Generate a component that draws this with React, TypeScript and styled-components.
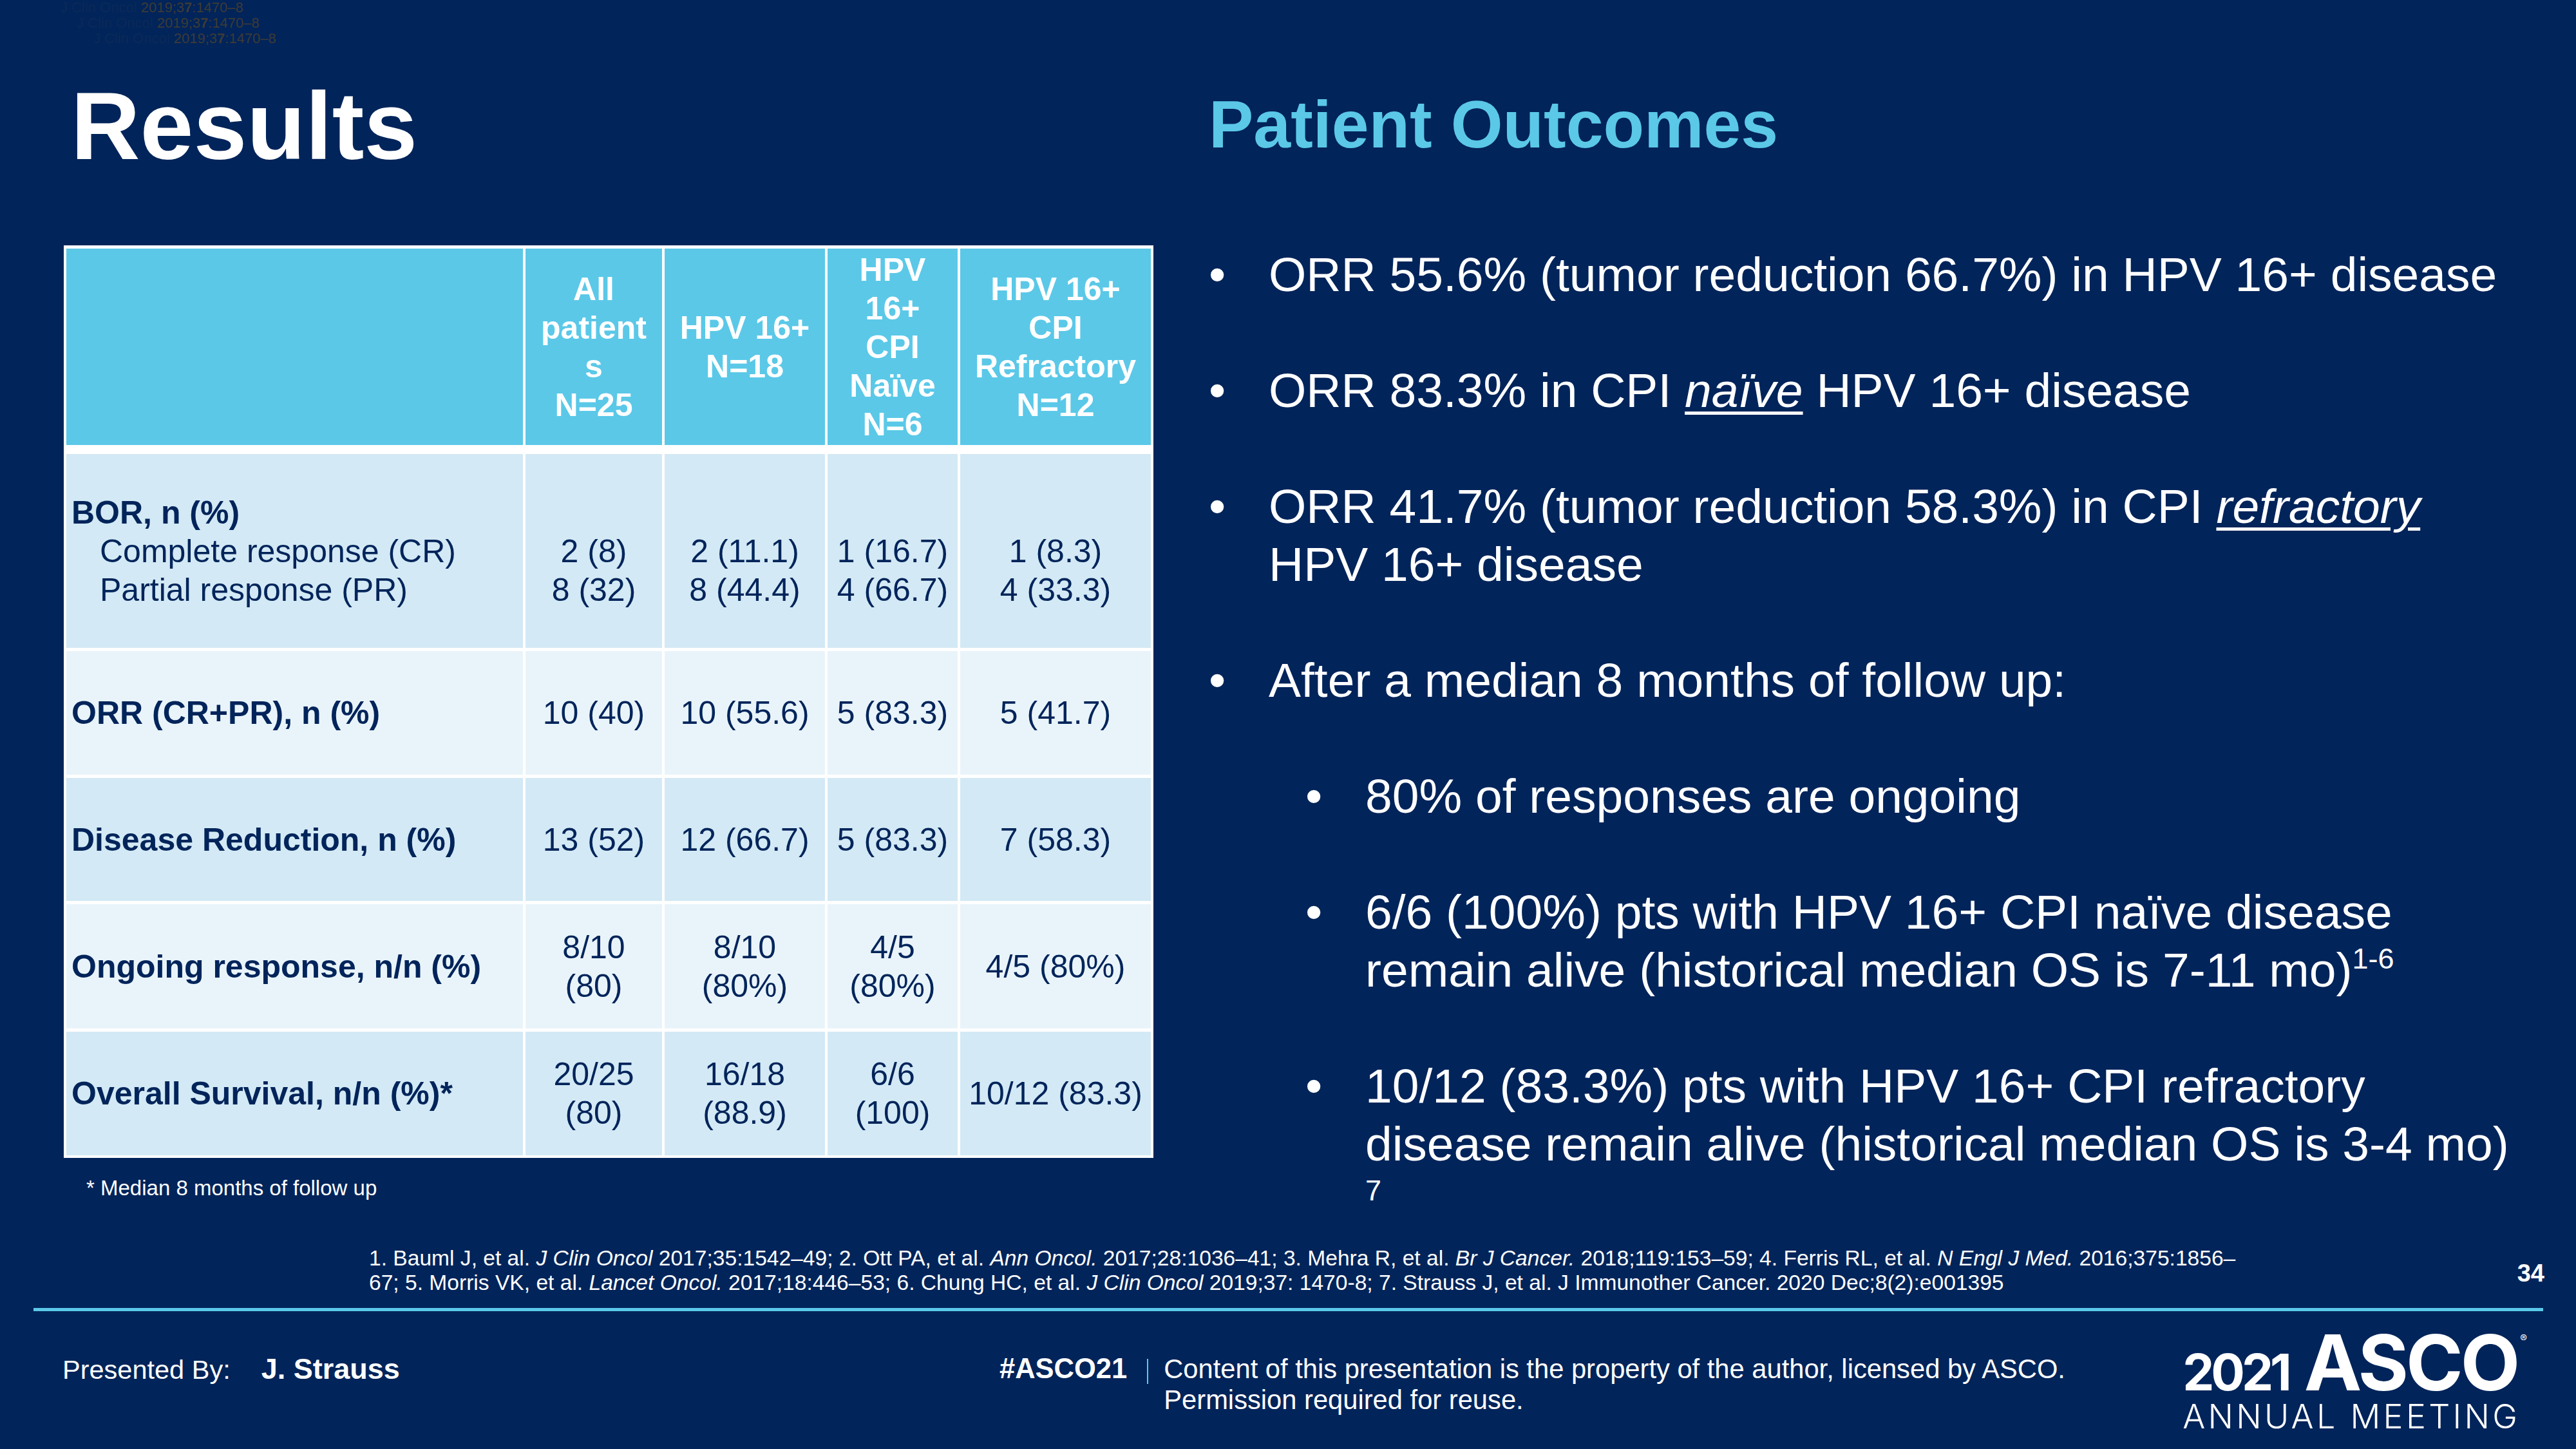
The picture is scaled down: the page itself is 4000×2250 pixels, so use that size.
import React from 'react';
import styled, { createGlobalStyle } from 'styled-components';

const NAVY = '#01245a';
const CYAN = '#5bc8e8';

const GlobalStyle = createGlobalStyle`
  html, body {
    margin: 0;
    padding: 0;
    background: ${NAVY};
  }
  body {
    font-family: "Liberation Sans", Arial, sans-serif;
  }
`;

// Slide frame
const Slide = styled.div`
  position: relative;
  width: 4000px;
  height: 2250px;
  overflow: hidden;
  background: ${NAVY};
  color: #fff;
  display: flex;
  flex-direction: column;
`;

// faint citation residue printed over the top-left corner
const GhostLayer = styled.div`
  position: absolute;
  top: 0;
  left: 0;
  font-size: 22px;
  line-height: 24px;
  color: #3d3b36;
  white-space: nowrap;
`;

const GhostLine = styled.div<{ $indent: number }>`
  padding-left: ${(p) => p.$indent}px;

  span {
    color: #0a2a58;
  }
`;

const Main = styled.div`
  display: flex;
  height: 1935px;
  padding-left: 99px;
  gap: 86px;
  flex: none;
`;

const LeftCol = styled.div`
  width: 1692px;
  padding-top: 121px;
  display: flex;
  flex-direction: column;
`;

const RightCol = styled.div`
  flex: 1;
  padding-top: 141px;
  display: flex;
  flex-direction: column;
`;

const Title = styled.h1`
  margin: 0 0 111px 11px;
  font-size: 149px;
  line-height: 149px;
  font-weight: 700;
  color: #fff;
`;

const SubTitle = styled.h2`
  margin: 0 0 135px 0;
  font-size: 104px;
  line-height: 105px;
  font-weight: 700;
  color: ${CYAN};
`;

// Table
type Tone = 'head' | 'dark' | 'light';

const toneBg: Record<Tone, string> = {
  head: CYAN,
  dark: '#d3e9f5',
  light: '#e9f4fa',
};

const TableFrame = styled.div`
  background: #fff;
  padding: 5px 4px 4px;
  display: flex;
  flex-direction: column;
  gap: 5px;
`;

const Row = styled.div<{ $h: number; $head?: boolean }>`
  display: grid;
  grid-template-columns: 709px 212px 249px 202px 296px;
  column-gap: 4px;
  height: ${(p) => p.$h}px;
  margin-bottom: ${(p) => (p.$head ? 9 : 0)}px;
`;

const Cell = styled.div<{ $tone: Tone; $left?: boolean }>`
  background: ${(p) => toneBg[p.$tone]};
  display: flex;
  flex-direction: column;
  justify-content: center;
  align-items: ${(p) => (p.$left ? 'flex-start' : 'center')};
  text-align: ${(p) => (p.$left ? 'left' : 'center')};
  padding: 0 ${(p) => (p.$left ? '0 0 8px' : '4px')};
  font-size: 50px;
  line-height: 60px;
  font-weight: ${(p) => (p.$tone === 'head' ? 700 : 400)};
  color: ${(p) => (p.$tone === 'head' ? '#fff' : NAVY)};
  white-space: nowrap;
`;

const Label = styled.div`
  font-weight: 700;
`;

const SubLabel = styled.div`
  padding-left: 44px;
`;

const Footnote = styled.div`
  margin: 27px 0 0 35px;
  font-size: 33px;
  line-height: 40px;
  color: #fff;
`;

// Bullets
const Bullet = styled.div<{ $level: 1 | 2 }>`
  display: flex;
  padding-left: ${(p) => (p.$level === 2 ? 150 : 0)}px;
  font-size: 75px;
  line-height: 90px;
  color: #fff;
  white-space: nowrap;

  & + & {
    margin-top: 90px;
  }
`;

const Marker = styled.span`
  width: 93px;
  flex: none;
`;

const BulletText = styled.div`
  em {
    font-style: italic;
    text-decoration: underline;
    text-decoration-thickness: 5px;
    text-underline-offset: 7px;
  }

  sup {
    font-size: 45px;
    line-height: 0;
    vertical-align: 28px;
  }
`;

// References
const RefsRow = styled.div`
  display: flex;
  height: 96px;
  flex: none;
`;

const Refs = styled.div`
  padding-left: 573px;
  font-size: 33.6px;
  line-height: 38px;
  color: #fff;
  white-space: nowrap;

  i {
    font-style: italic;
  }
`;

const PageNum = styled.div`
  margin: 19px 49px 0 auto;
  font-size: 38px;
  line-height: 46px;
  font-weight: 700;
`;

const Divider = styled.div`
  height: 5px;
  margin: 0 51px 0 52px;
  background: ${CYAN};
  flex: none;
`;

// Footer
const Footer = styled.div`
  display: flex;
  align-items: flex-start;
  flex: 1;
  padding-left: 97px;
`;

const Presenter = styled.div`
  display: flex;
  align-items: baseline;
  width: 1455px;
  margin-top: 65px;
  font-size: 41.5px;
  line-height: 49px;
`;

const PresenterName = styled.span`
  margin-left: 48px;
  font-size: 45px;
  font-weight: 700;
`;

const Notice = styled.div`
  display: flex;
  align-items: flex-start;
  margin-top: 63px;
`;

const Hashtag = styled.div`
  font-size: 43.5px;
  line-height: 52px;
  font-weight: 700;
`;

const Bar = styled.div`
  width: 2px;
  height: 39px;
  margin: 11px 24px 0 31px;
  background: ${CYAN};
`;

const NoticeText = styled.div`
  margin-top: 3px;
  font-size: 41.7px;
  line-height: 48px;
`;

const Logo = styled.div`
  margin: 28px 76px 0 auto;
  display: flex;
  flex-direction: column;
  font-family: Inter, "Liberation Sans", sans-serif;
  color: #fff;
`;

const LogoTop = styled.div`
  display: flex;
  align-items: baseline;
  line-height: 103px;
`;

const LogoYear = styled.span`
  font-size: 78px;
  font-weight: 700;
  letter-spacing: -5px;
  margin-right: 24px;
`;

const LogoName = styled.span`
  font-size: 120px;
  font-weight: 700;
  letter-spacing: -4px;
`;

const LogoMark = styled.span`
  font-size: 16px;
  align-self: flex-start;
  line-height: 16px;
  margin: 6px 0 0 4px;
`;

const LogoSub = styled.div`
  font-size: 52px;
  line-height: 36px;
  font-weight: 300;
  letter-spacing: 4.3px;
`;

type Lines = React.ReactNode[];

const header: Lines[] = [
  [],
  ['All', 'patient', 's', 'N=25'],
  ['HPV 16+', 'N=18'],
  ['HPV', '16+', 'CPI', 'Naïve', 'N=6'],
  ['HPV 16+', 'CPI', 'Refractory', 'N=12'],
];

interface BodyRow {
  tone: Tone;
  h: number;
  label: React.ReactNode;
  values: Lines[];
}

const body: BodyRow[] = [
  {
    tone: 'dark',
    h: 301,
    label: (
      <>
        <Label>BOR, n (%)</Label>
        <SubLabel>Complete response (CR)</SubLabel>
        <SubLabel>Partial response (PR)</SubLabel>
      </>
    ),
    values: [
      ['\u00a0', '2 (8)', '8 (32)'],
      ['\u00a0', '2 (11.1)', '8 (44.4)'],
      ['\u00a0', '1 (16.7)', '4 (66.7)'],
      ['\u00a0', '1 (8.3)', '4 (33.3)'],
    ],
  },
  {
    tone: 'light',
    h: 192,
    label: <Label>ORR (CR+PR), n (%)</Label>,
    values: [['10 (40)'], ['10 (55.6)'], ['5 (83.3)'], ['5 (41.7)']],
  },
  {
    tone: 'dark',
    h: 191,
    label: <Label>Disease Reduction, n (%)</Label>,
    values: [['13 (52)'], ['12 (66.7)'], ['5 (83.3)'], ['7 (58.3)']],
  },
  {
    tone: 'light',
    h: 193,
    label: <Label>Ongoing response, n/n (%)</Label>,
    values: [['8/10', '(80)'], ['8/10', '(80%)'], ['4/5', '(80%)'], ['4/5 (80%)']],
  },
  {
    tone: 'dark',
    h: 192,
    label: <Label>Overall Survival, n/n (%)*</Label>,
    values: [['20/25', '(80)'], ['16/18', '(88.9)'], ['6/6', '(100)'], ['10/12 (83.3)']],
  },
];

const ResultsTable: React.FC = () => (
  <TableFrame>
    <Row $h={305} $head>
      {header.map((lines, i) => (
        <Cell key={i} $tone="head">
          {lines.map((l, j) => (
            <div key={j}>{l}</div>
          ))}
        </Cell>
      ))}
    </Row>
    {body.map((row, r) => (
      <Row key={r} $h={row.h}>
        <Cell $tone={row.tone} $left>
          {row.label}
        </Cell>
        {row.values.map((lines, i) => (
          <Cell key={i} $tone={row.tone}>
            {lines.map((l, j) => (
              <div key={j}>{l}</div>
            ))}
          </Cell>
        ))}
      </Row>
    ))}
  </TableFrame>
);

const App: React.FC = () => (
  <>
    <GlobalStyle />
    <Slide>
      <GhostLayer>
        <GhostLine $indent={94}>
          <span>J Clin Oncol </span>2019;3<b>7</b>:1470–8
        </GhostLine>
        <GhostLine $indent={119}>
          <span>J Clin Oncol </span>2019;3<b>7</b>:1470–8
        </GhostLine>
        <GhostLine $indent={145}>
          <span>J Clin Oncol </span>2019;3<b>7</b>:1470–8
        </GhostLine>
      </GhostLayer>

      <Main>
        <LeftCol>
          <Title>Results</Title>
          <ResultsTable />
          <Footnote>* Median 8 months of follow up</Footnote>
        </LeftCol>

        <RightCol>
          <SubTitle>Patient Outcomes</SubTitle>
          <Bullet $level={1}>
            <Marker>•</Marker>
            <BulletText>ORR 55.6% (tumor reduction 66.7%) in HPV 16+ disease</BulletText>
          </Bullet>
          <Bullet $level={1}>
            <Marker>•</Marker>
            <BulletText>
              ORR 83.3% in CPI <em>naïve</em> HPV 16+ disease
            </BulletText>
          </Bullet>
          <Bullet $level={1}>
            <Marker>•</Marker>
            <BulletText>
              ORR 41.7% (tumor reduction 58.3%) in CPI <em>refractory</em>
              <br />
              HPV 16+ disease
            </BulletText>
          </Bullet>
          <Bullet $level={1}>
            <Marker>•</Marker>
            <BulletText>After a median 8 months of follow up:</BulletText>
          </Bullet>
          <Bullet $level={2}>
            <Marker>•</Marker>
            <BulletText>80% of responses are ongoing</BulletText>
          </Bullet>
          <Bullet $level={2}>
            <Marker>•</Marker>
            <BulletText>
              6/6 (100%) pts with HPV 16+ CPI naïve disease
              <br />
              remain alive (historical median OS is 7-11 mo)<sup>1-6</sup>
            </BulletText>
          </Bullet>
          <Bullet $level={2}>
            <Marker>•</Marker>
            <BulletText>
              10/12 (83.3%) pts with HPV 16+ CPI refractory
              <br />
              disease remain alive (historical median OS is 3-4 mo)
              <br />
              <sup>7</sup>
            </BulletText>
          </Bullet>
        </RightCol>
      </Main>

      <RefsRow>
        <Refs>
          1. Bauml J, et al. <i>J Clin Oncol</i> 2017;35:1542–49; 2. Ott PA, et al. <i>Ann Oncol.</i>{' '}
          2017;28:1036–41; 3. Mehra R, et al. <i>Br J Cancer.</i> 2018;119:153–59; 4. Ferris RL, et al.{' '}
          <i>N Engl J Med.</i> 2016;375:1856–
          <br />
          67; 5. Morris VK, et al. <i>Lancet Oncol.</i> 2017;18:446–53; 6. Chung HC, et al.{' '}
          <i>J Clin Oncol</i> 2019;37: 1470-8; 7. Strauss J, et al. J Immunother Cancer. 2020
          Dec;8(2):e001395
        </Refs>
        <PageNum>34</PageNum>
      </RefsRow>

      <Divider />

      <Footer>
        <Presenter>
          <span>Presented By:</span>
          <PresenterName>J. Strauss</PresenterName>
        </Presenter>
        <Notice>
          <Hashtag>#ASCO21</Hashtag>
          <Bar />
          <NoticeText>
            Content of this presentation is the property of the author, licensed by ASCO.
            <br />
            Permission required for reuse.
          </NoticeText>
        </Notice>
        <Logo>
          <LogoTop>
            <LogoYear>2021</LogoYear>
            <LogoName>ASCO</LogoName>
            <LogoMark>®</LogoMark>
          </LogoTop>
          <LogoSub>ANNUAL MEETING</LogoSub>
        </Logo>
      </Footer>
    </Slide>
  </>
);

export default App;
